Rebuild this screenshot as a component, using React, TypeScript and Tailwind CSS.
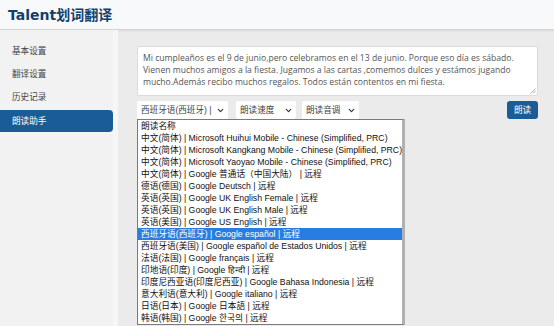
import { ChevronDown } from 'lucide-react';

const voices = [
  '朗读名称',
  '中文(简体) | Microsoft Huihui Mobile - Chinese (Simplified, PRC)',
  '中文(简体) | Microsoft Kangkang Mobile - Chinese (Simplified, PRC)',
  '中文(简体) | Microsoft Yaoyao Mobile - Chinese (Simplified, PRC)',
  '中文(简体) | Google 普通话（中国大陆） | 远程',
  '德语(德国) | Google Deutsch | 远程',
  '英语(英国) | Google UK English Female | 远程',
  '英语(英国) | Google UK English Male | 远程',
  '英语(美国) | Google US English | 远程',
  '西班牙语(西班牙) | Google español | 远程',
  '西班牙语(美国) | Google español de Estados Unidos | 远程',
  '法语(法国) | Google français | 远程',
  '印地语(印度) | Google हिन्दी | 远程',
  '印度尼西亚语(印度尼西亚) | Google Bahasa Indonesia | 远程',
  '意大利语(意大利) | Google italiano | 远程',
  '日语(日本) | Google 日本語 | 远程',
  '韩语(韩国) | Google 한국의 | 远程',
];

const menu = ['基本设置', '翻译设置', '历史记录', '朗读助手'];

const font = { fontFamily: '"Liberation Sans", Arial, "Noto Sans CJK SC", sans-serif' };

function Select({ label, width }: { label: string; width: string }) {
  return (
    <div
      className={`${width} h-[18px] bg-white rounded-[2px] flex items-center pl-[4px] pr-[3px] text-[8.6px] text-[#444] overflow-hidden`}
    >
      <span className="flex-1 whitespace-nowrap overflow-hidden">{label}</span>
      <ChevronDown size={9} strokeWidth={3} className="shrink-0 ml-[3px] text-[#333]" />
    </div>
  );
}

export default function App() {
  return (
    <div className="w-[554px] h-[326px] overflow-hidden flex flex-col bg-[#ebebeb]" style={font}>
      <header className="h-[30px] shrink-0 bg-[#f8f9fa] border-b border-[#d4d4d4] shadow-[0_1px_2px_rgba(0,0,0,0.08)] flex items-center pl-[8px]">
        <h1
          className="text-[14px] font-bold text-[#123f6c] leading-none"
          style={{ fontFamily: '"DejaVu Sans", Verdana, "Noto Sans CJK SC", sans-serif' }}
        >
          Talent划词翻译
        </h1>
      </header>

      <div className="flex flex-1 min-h-0">
        <aside className="w-[118px] shrink-0 bg-[#f2f2f2] border-r-[5px] border-[#f6f6f6] pt-[10px]">
          {menu.map((item, i) => (
            <div
              key={item}
              className={
                i === 3
                  ? 'h-[22px] mt-[1px] flex items-center pl-[12px] text-[8.6px] text-white bg-[#1a5c96] rounded-r-[4px]'
                  : 'h-[23px] flex items-center pl-[12px] text-[8.6px] text-[#444]'
              }
            >
              {item}
            </div>
          ))}
        </aside>

        <main className="flex-1 pl-[19px] pr-[16px] pt-[16px] relative">
          <div
            className="h-[50px] bg-white border border-[#dcdcdc] rounded-[2px] px-[5px] pt-[5px] text-[8.6px] leading-[12px] text-[#555] relative whitespace-nowrap overflow-hidden"
            style={{ fontFamily: '"Open Sans", "Noto Sans", sans-serif' }}
          >
            <div>Mi cumpleaños es el 9 de junio,pero celebramos en el 13 de junio. Porque eso día es sábado.</div>
            <div>Vienen muchos amigos a la fiesta. Jugamos a las cartas ,comemos dulces y estámos jugando</div>
            <div>mucho.Además recibo muchos regalos. Todos están contentos en mi fiesta.</div>
            <svg className="absolute right-[1px] bottom-[1px]" width="6" height="6" viewBox="0 0 6 6">
              <path d="M5.5 0.5 L0.5 5.5 M5.5 3 L3 5.5" stroke="#999" strokeWidth="0.8" />
            </svg>
          </div>

          <div className="flex items-center mt-[5px]">
            <Select label="西班牙语(西班牙) | Google español" width="w-[91px]" />
            <div className="ml-[8px]">
              <Select label="朗读速度" width="w-[60px]" />
            </div>
            <div className="ml-[6px]">
              <Select label="朗读音调" width="w-[57px]" />
            </div>
            <button className="ml-auto w-[31px] h-[18px] bg-[#1a5c96] rounded-[3px] text-white text-[8.6px] leading-none">
              朗读
            </button>
          </div>

          <ul className="absolute left-[19px] top-[89px] w-[268px] bg-white border border-[#7a7a7a] border-r-[3px] border-r-[#b0b0b0] text-[8.7px] text-[#111]">
            {voices.map((v, i) => (
              <li
                key={v}
                className={
                  i === 9
                    ? 'h-[12px] leading-[12px] pl-[3px] whitespace-nowrap bg-[#2a7de0] text-white'
                    : 'h-[12px] leading-[12px] pl-[3px] whitespace-nowrap'
                }
              >
                {v}
              </li>
            ))}
          </ul>
        </main>
      </div>
    </div>
  );
}
